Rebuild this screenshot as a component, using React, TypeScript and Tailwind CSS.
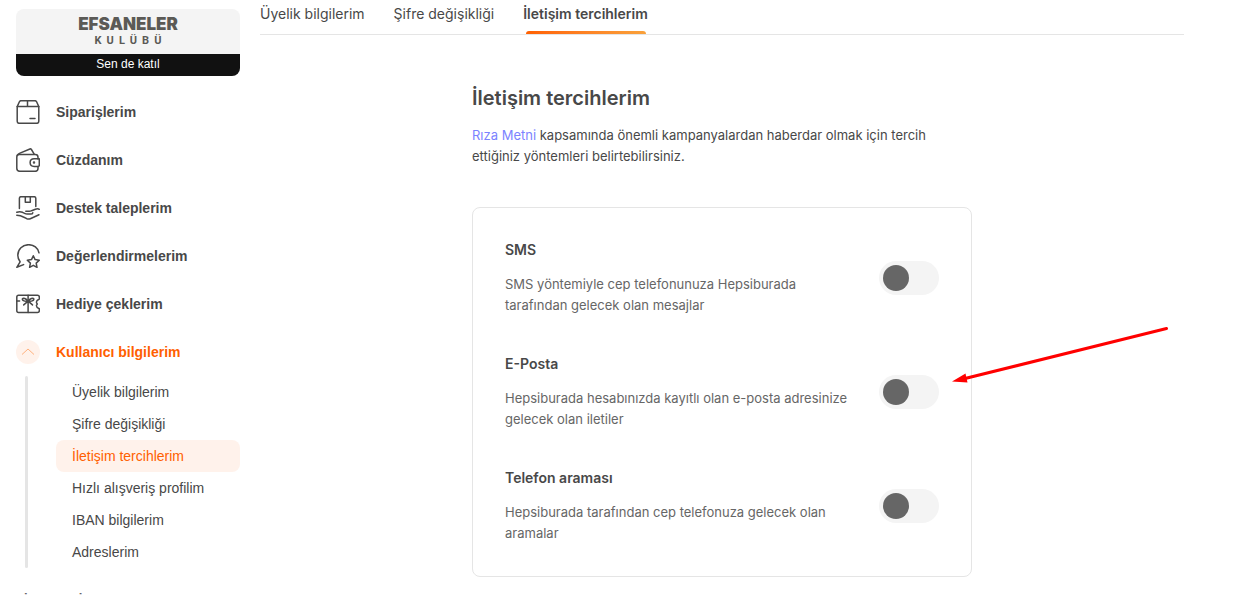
import React from 'react';

const iconProps = {
  width: 24,
  height: 24,
  viewBox: '0 0 24 24',
  fill: 'none',
  stroke: 'currentColor',
  strokeWidth: 1.5,
  strokeLinecap: 'round' as const,
  strokeLinejoin: 'round' as const,
  'aria-hidden': true,
};

const BoxIcon = () => (
  <svg {...iconProps}>
    <path d="M1.200 6.600 3.400 1.800Q3.900.7 5 .7h14q1.100 0 1.600 1.100l2.200 4.800v14.600q0 2.100-2.100 2.100H3.300q-2.100 0-2.100-2.100z" />
    <path d="M1.200 6.600h21.600M11.500.7v5.900" />
    <path d="M14 18.600h5" />
  </svg>
);

const WalletIcon = () => (
  <svg {...iconProps}>
    <path d="M22 11V9.200q0-2.700-2.700-2.700H3.200Q.8 6.500.8 8.900v11.400q0 3 3 3h15.500q2.700 0 2.700-2.700v-2" />
    <path d="M1.400 7.200q.5-1.200 2-1.800L13.900 1q1-.4 1.500.5l2.800 4.600" />
    <path d="M23.300 10.800h-5.200q-4 0-4 3.800t4 3.800h4q1.200 0 1.200-1.200z" />
    <circle cx="18" cy="14.600" r=".5" fill="currentColor" />
  </svg>
);

const SupportIcon = () => (
  <svg {...iconProps}>
    <path d="M3.400 12.600V2.300Q3.400.7 5 .7h13.200q1.600 0 1.600 1.600v8.200" />
    <path d="M9.300.7v5.500h5V.7" />
    <path d="M.8 16.200q3.200-1 5.700.1l2.700 1.400q.8.400 1.800.4h3.600q2 0 2.200-1.300" />
    <path d="M9.800 15.300h3.400q1.200 0 2.400-.6l3.800-1.500q2.400-1 3.900.1M.8 19.300q3.800.2 6.600 1.700l3.400 1.700q1.700.8 3.500 0l8.700-4" />
  </svg>
);

const ReviewIcon = () => (
  <svg {...iconProps}>
    <path d="M23 8.800C22 4 17.800.7 12.600.7 6.500.7 1.800 5.300 1.800 11.200c0 3 1.100 5 2.300 6.600L.8 23.300l6.800-2.700" />
    <path d="m17.300 11.800 1.800 3.800 4.200.6-3.100 2.900.8 4.200-3.700-2-3.700 2 .8-4.200-3.100-2.900 4.200-.6z" />
  </svg>
);

const GiftIcon = () => (
  <svg {...iconProps}>
    <path d="M2.500 3.300h19q1.800 0 1.800 1.700v2q-2.900 1.300-2.900 3 0 .9.900 1.900-.9 1-.9 1.900 0 1.700 2.900 3v2q0 1.700-1.800 1.700h-19q-1.700 0-1.700-1.700V5q0-1.700 1.700-1.700z" />
    <path d="M12.100 3.300v17.200M.8 9.100h2.800" />
    <path d="M12.100 9.100C10 6.300 7.200 5.700 6.500 6.700S7.700 9.800 12.100 9.100c4.400.7 6.300-1.400 5.600-2.400s-3.500-.4-5.600 2.400zM12.100 9.100l-4.400 3.800M12.100 9.100l4.400 3.800" />
  </svg>
);

const menuItems = [
  { label: 'Siparişlerim', icon: <BoxIcon /> },
  { label: 'Cüzdanım', icon: <WalletIcon /> },
  { label: 'Destek taleplerim', icon: <SupportIcon /> },
  { label: 'Değerlendirmelerim', icon: <ReviewIcon /> },
  { label: 'Hediye çeklerim', icon: <GiftIcon /> },
];

const subItems = [
  { label: 'Üyelik bilgilerim' },
  { label: 'Şifre değişikliği' },
  { label: 'İletişim tercihlerim', active: true },
  { label: 'Hızlı alışveriş profilim' },
  { label: 'IBAN bilgilerim' },
  { label: 'Adreslerim' },
];

const tabs = [
  { label: 'Üyelik bilgilerim' },
  { label: 'Şifre değişikliği' },
  { label: 'İletişim tercihlerim', active: true },
];

const preferences = [
  {
    id: 'sms',
    title: 'SMS',
    text: 'SMS yöntemiyle cep telefonunuza Hepsiburada tarafından gelecek olan mesajlar',
  },
  {
    id: 'email',
    title: 'E-Posta',
    text: 'Hepsiburada hesabınızda kayıtlı olan e-posta adresinize gelecek olan iletiler',
    pointed: true,
  },
  {
    id: 'phone',
    title: 'Telefon araması',
    text: 'Hepsiburada tarafından cep telefonuza gelecek olan aramalar',
  },
];

const Arrow = () => (
  <svg
    className="pointer-events-none absolute -top-7 left-full ml-3"
    width="218"
    height="60"
    viewBox="0 0 218 60"
    aria-hidden="true"
  >
    <path d="M12 53 215.500 2.500" stroke="#ff0000" strokeWidth="3" strokeLinecap="round" />
    <path d="M1 55.500 14.500 47.500l2 9z" fill="#ff0000" />
  </svg>
);

const Sidebar = () => (
  <aside className="w-56 shrink-0 pt-[9px] font-['Liberation_Sans',Arial,sans-serif] text-sm">
    <a href="#kulup" className="block overflow-hidden rounded-lg bg-[#f4f4f4] text-center">
      <span className="flex h-[45px] flex-col items-center pt-1 text-[#5b5a56]">
        <span className="font-['Inter',sans-serif] text-[17px] leading-[22px] font-black">EFSANELER</span>
        <span className="flex gap-[5px] font-['Roboto',sans-serif] text-[11px] leading-3 font-bold">
          {'KULÜBÜ'.split('').map((letter, i) => (
            <span key={i}>{letter}</span>
          ))}
        </span>
      </span>
      <span className="block h-[22px] bg-[#111] text-xs leading-5 text-white">Sen de katıl</span>
    </a>

    <nav className="mt-3">
      <ul>
        {menuItems.map((item) => (
          <li key={item.label}>
            <a href="#menu" className="flex h-12 items-center gap-4 font-bold">
              {item.icon}
              {item.label}
            </a>
          </li>
        ))}
        <li>
          <button type="button" className="flex h-12 items-center gap-4 font-bold text-[#ff6000]">
            <span className="flex size-6 items-center justify-center rounded-full bg-[#fff2eb]">
              <svg width="14" height="8" viewBox="0 0 14 8" fill="none" stroke="#ffb27f" aria-hidden="true">
                <path d="m1 6.500 6-5.500 6 5.500" />
              </svg>
            </span>
            Kullanıcı bilgilerim
          </button>
          <div className="flex">
            <span className="ml-[9px] w-[3px] rounded-full bg-[#e5e5e5]" />
            <ul className="ml-7 flex-1">
              {subItems.map((item) => (
                <li key={item.label}>
                  <a
                    href="#alt-menu"
                    className={`block rounded-lg px-4 leading-8 ${item.active ? 'bg-[#fff2eb] text-[#ff6000]' : ''}`}
                  >
                    {item.label}
                  </a>
                </li>
              ))}
            </ul>
          </div>
        </li>
      </ul>
      <h2 className="mt-[22px] text-[13px] leading-5 font-bold text-[#666]">LİSTELERİM</h2>
    </nav>
  </aside>
);

const App: React.FC = () => {
  return (
    <div className="flex h-screen gap-5 overflow-hidden bg-white pl-4 font-['Inter',sans-serif] text-sm text-[#484848]">
      <Sidebar />

      <main className="mr-[70px] min-w-0 flex-1">
        <nav className="flex h-[35px] gap-[29px] border-b border-[#e5e5e5]">
          {tabs.map((tab) => (
            <a
              key={tab.label}
              href="#sekme"
              className={`flex flex-col items-center justify-between pt-1 ${tab.active ? 'font-semibold' : ''}`}
            >
              {tab.label}
              {tab.active && (
                <span className="h-[3px] w-30 rounded-t-sm bg-linear-to-r from-[#ff6000] to-[#f9a13a]" />
              )}
            </a>
          ))}
        </nav>

        <section className="mx-auto mt-12 max-w-[500px]">
          <h1 className="text-xl leading-[30px] font-semibold">İletişim tercihlerim</h1>
          <p className="mt-3 text-[13px] leading-[21px]">
            <a href="#riza-metni" className="text-[#7b83ff]">Rıza Metni</a> kapsamında önemli kampanyalardan
            haberdar olmak için tercih ettiğiniz yöntemleri belirtebilirsiniz.
          </p>

          <div className="mt-10 flex flex-col gap-[38px] rounded-lg border border-[#e5e5e5] p-8">
            {preferences.map((pref) => (
              <div key={pref.id} className="relative flex items-center justify-between gap-5">
                <div>
                  <label htmlFor={pref.id} className="block leading-5 font-semibold">{pref.title}</label>
                  <p id={`${pref.id}-text`} className="mt-[14px] text-[13px] leading-[21px] text-[#666]">
                    {pref.text}
                  </p>
                </div>
                <input
                  id={pref.id}
                  type="checkbox"
                  role="switch"
                  aria-describedby={`${pref.id}-text`}
                  className="h-[34px] w-[60px] shrink-0 cursor-pointer appearance-none rounded-full bg-[#f4f4f4] p-1 before:block before:size-[26px] before:rounded-full before:bg-[#666] before:transition-transform checked:before:translate-x-[26px] checked:before:bg-[#ff6000]"
                />
                {pref.pointed && <Arrow />}
              </div>
            ))}
          </div>
        </section>
      </main>
    </div>
  );
};

export default App;
